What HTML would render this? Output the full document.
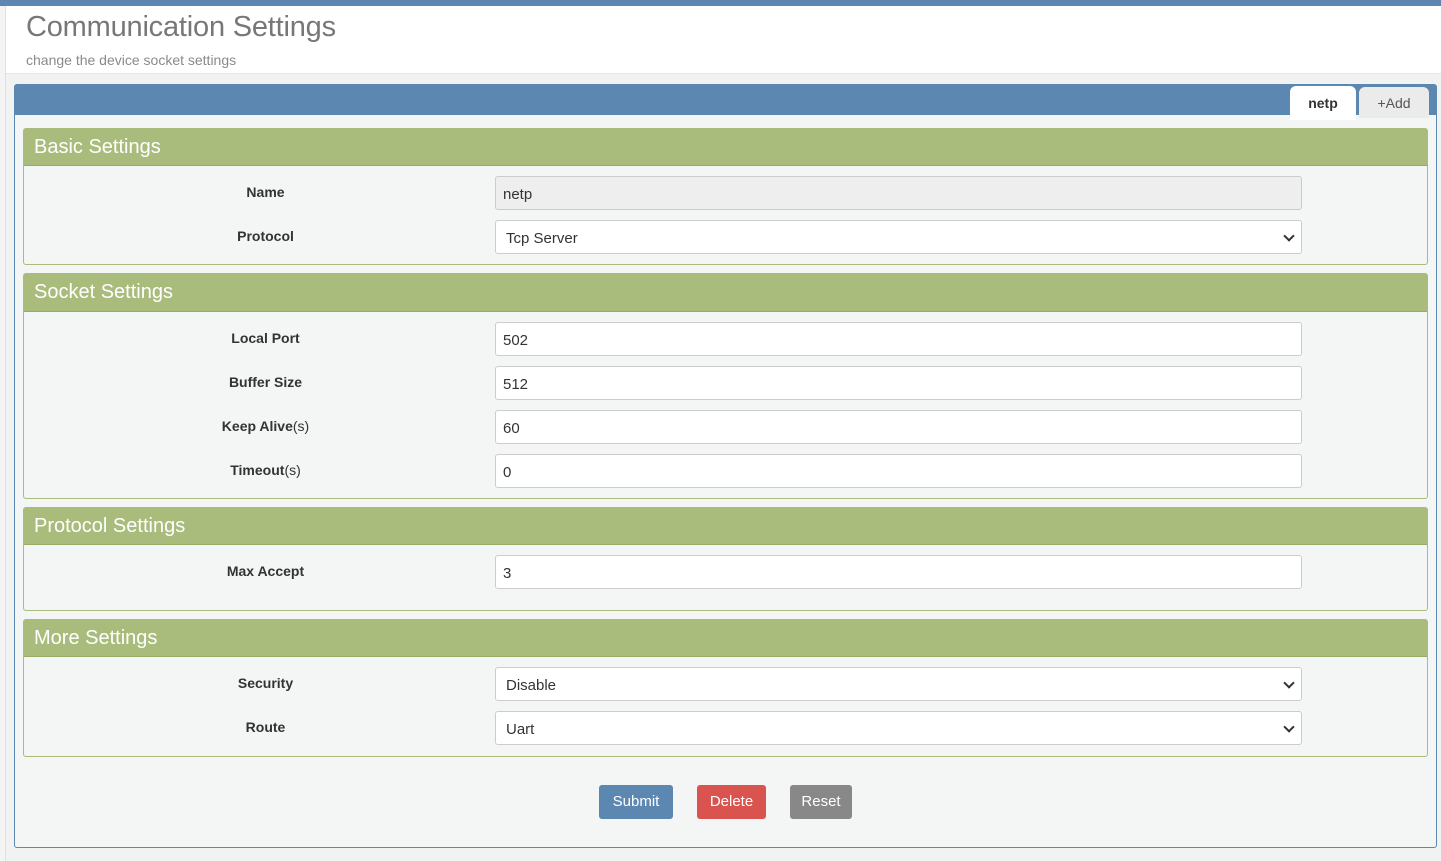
<!DOCTYPE html>
<html><head><style>
*{box-sizing:border-box;margin:0;padding:0}
body{width:1441px;height:861px;background:#f1f2f2;font-family:"Liberation Sans",sans-serif;position:relative;overflow:hidden;color:#333}
.top{position:absolute;left:0;top:0;width:1441px;height:6px;background:#5b87b0}
.hdr{position:absolute;left:6px;top:6px;width:1435px;height:68px;background:#fff;border-bottom:1px solid #e6e6e6}
.side{position:absolute;left:0;top:6px;width:6px;height:855px;background:#f4f4f4;border-right:1px solid #e0e0e0}
h1{position:absolute;left:26px;top:11px;font-weight:normal;font-size:29px;color:#777;letter-spacing:-0.2px}
.sub{position:absolute;left:26px;top:52px;font-size:14px;color:#8a8a8a}
.panel{position:absolute;left:14px;top:84px;width:1423px;height:764px;background:#f4f5f5;border:1px solid #5b87b0;border-radius:3px}
.pbar{position:absolute;left:0;top:0;width:100%;height:30px;background:#5b87b0}
.tab{position:absolute;top:1px;height:34px;border-radius:6px 6px 0 0;font-size:14px;text-align:center;line-height:34px}
.sec{position:absolute;left:8px;width:1405px;border:1px solid #a9bc7c;border-radius:3px;background:#f4f5f5}
.sh{height:37px;background:#a9bc7c;color:#fff;font-size:20px;line-height:36px;padding-left:10px;border-bottom:1px solid #97ab69}
.row{position:relative;height:44px}
.lab{position:absolute;left:0;width:483px;text-align:center;font-size:14px;font-weight:bold;top:18px;color:#333}
.lab span{font-weight:normal}
.in{position:absolute;left:471px;top:10px;width:807px;height:34px;background:#fff;border:1px solid #ccc;border-radius:3px;font-size:15px;line-height:35px;padding-left:7px;color:#333}
.in.ro{background:#eee}
.in.sel{padding-left:10px}
.in.sel:after{content:"";position:absolute;right:8px;top:11px;width:6px;height:6px;border-right:2px solid #333;border-bottom:2px solid #333;transform:rotate(45deg)}
.btn{position:absolute;top:700px;height:34px;border-radius:3px;color:#fff;font-size:15px;line-height:34px;text-align:center}
</style></head><body>
<div class="top"></div>
<div class="side"></div>
<div class="hdr"></div>
<h1>Communication Settings</h1>
<div class="sub">change the device socket settings</div>
<div class="panel">
<div class="pbar"></div>
<div class="tab" style="left:1275px;width:66px;background:#fff;font-weight:bold;color:#333">netp</div>
<div class="tab" style="left:1344px;width:70px;background:#ebebeb;color:#555;top:2px;height:31px;line-height:32px">+Add</div>
<div class="sec" style="top:43px;height:137px"><div class="sh">Basic Settings</div>
<div class="row"><div class="lab">Name</div><div class="in ro">netp</div></div>
<div class="row"><div class="lab">Protocol</div><div class="in sel">Tcp Server</div></div></div>
<div class="sec" style="top:188px;height:226px"><div class="sh" style="height:38px">Socket Settings</div>
<div class="row"><div class="lab">Local Port</div><div class="in">502</div></div>
<div class="row"><div class="lab">Buffer Size</div><div class="in">512</div></div>
<div class="row"><div class="lab">Keep Alive<span>(s)</span></div><div class="in">60</div></div>
<div class="row"><div class="lab">Timeout<span>(s)</span></div><div class="in">0</div></div></div>
<div class="sec" style="top:422px;height:104px"><div class="sh">Protocol Settings</div>
<div class="row"><div class="lab">Max Accept</div><div class="in">3</div></div></div>
<div class="sec" style="top:534px;height:138px"><div class="sh">More Settings</div>
<div class="row"><div class="lab">Security</div><div class="in sel">Disable</div></div>
<div class="row"><div class="lab">Route</div><div class="in sel">Uart</div></div></div>
<div class="btn" style="left:584px;width:74px;background:#5b87b0">Submit</div>
<div class="btn" style="left:682px;width:69px;background:#d9534f">Delete</div>
<div class="btn" style="left:775px;width:62px;background:#888">Reset</div>
</div>
</body></html>
